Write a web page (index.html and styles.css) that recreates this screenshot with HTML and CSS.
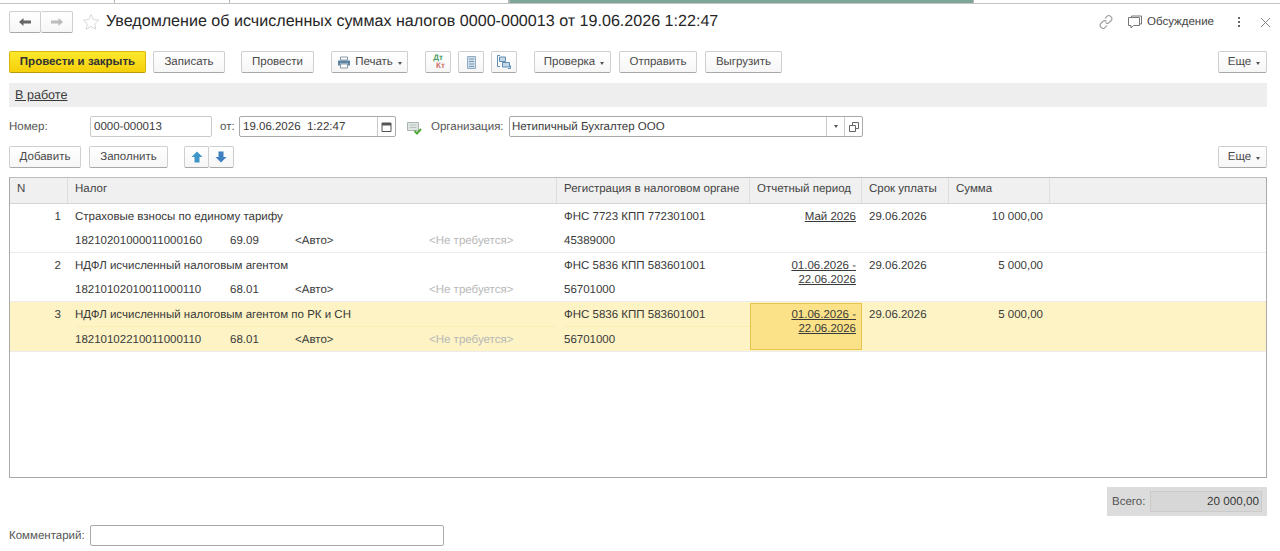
FILE: index.html
```html
<!DOCTYPE html>
<html>

<head>
    <meta http-equiv="Content-Type" content="text/html; charset=utf-8" />
    <title>Уведомление об исчисленных суммах налогов</title>
    <link rel="stylesheet" href="styles.css">
</head>

<body>
    <!-- Tab strip, only its lower edge is visible -->
    <div class="tabs">
        <div class="tab tab-a"></div>
        <div class="tab tab-b"></div>
        <div class="tab tab-c"></div>
        <div class="tab tab-active"></div>
        <div class="tab tab-rest"></div>
    </div>

    <div class="title-row">
        <div class="nav-group">
            <button class="btn nav-btn">
                <svg width="14" height="10" viewBox="0 0 14 10"><path d="M1 5l4.500-4v2.500h7.500v3h-7.500v2.500z" fill="#666" /></svg>
            </button>
            <button class="btn nav-btn">
                <svg width="14" height="10" viewBox="0 0 14 10"><path d="M13 5l-4.500-4v2.500h-7.500v3h7.500v2.500z" fill="#bbb" /></svg>
            </button>
        </div>
        <svg class="star" width="18" height="18" viewBox="0 0 18 18"><path d="M9 1.500l2.300 5 5.400.6-4 3.700 1.100 5.400-4.800-2.700-4.800 2.700 1.100-5.400-4-3.700 5.400-.6z" fill="none" stroke="#d8d8d8" /></svg>
        <h1 class="title">Уведомление об исчисленных суммах налогов 0000-000013 от 19.06.2026 1:22:47</h1>
        <div class="title-tools">
            <svg class="link-icon" width="16" height="16" viewBox="0 0 16 16" fill="none" stroke="#999" stroke-width="1.100">
                <path d="M7 4.500l2-2.200a2.400 2.400 0 0 1 3.500 0l.7.7a2.400 2.400 0 0 1 0 3.500l-2.200 2.200a2.400 2.400 0 0 1-3.400 0" />
                <path d="M9 11.500l-2 2.200a2.400 2.400 0 0 1-3.500 0l-.7-.7a2.400 2.400 0 0 1 0-3.500l2.200-2.200a2.400 2.400 0 0 1 3.400 0" />
            </svg>
            <svg class="chat-icon" width="14" height="14" viewBox="0 0 14 14" fill="none" stroke="#777">
                <path d="M3.500 2.500v-1.500h10v8h-1.500" />
                <path d="M.5 2.500h11v8h-6l-2.500 2.500v-2.500h-2.500z" />
            </svg>
            <span class="discuss">Обсуждение</span>
            <div class="kebab"><i></i><i></i><i></i></div>
            <svg class="close-icon" width="11" height="11" viewBox="0 0 11 11"><path d="M1 1l9 9M10 1l-9 9" stroke="#888" fill="none" /></svg>
        </div>
    </div>

    <div class="toolbar">
        <button class="btn btn-primary">Провести и закрыть</button>
        <button class="btn w-72 ml-7">Записать</button>
        <button class="btn w-73 ml-16">Провести</button>
        <button class="btn w-77 ml-17">
            <svg class="print-icon" width="14" height="13" viewBox="0 0 14 13">
                <path d="M3.500 4v-3h7v3z" fill="#fff" stroke="#8a9aa8" />
                <path d="M1 4.500h12v5h-2v-2h-8v2h-2z" fill="#5b84a6" />
                <path d="M3.500 8h7v4h-7z" fill="#fff" stroke="#8a9aa8" />
            </svg>Печать<span class="caret"></span>
        </button>
        <button class="btn icon-btn ml-17">
            <span class="dtkt"><span class="dt">Дт</span><span class="kt">Кт</span></span>
        </button>
        <button class="btn icon-btn ml-7">
            <svg width="9" height="13" viewBox="0 0 9 13">
                <path d="M.5.500h8v12h-8z" fill="#cfdde9" stroke="#8fadc6" />
                <path d="M2 3h5M2 5.500h5M2 8h5M2 10.500h5" stroke="#7f9fb9" />
            </svg>
        </button>
        <button class="btn icon-btn ml-7">
            <svg width="14" height="14" viewBox="0 0 14 14" fill="none" stroke="#5f8fb4">
                <path d="M3 .500h-2.500v11h2.500M11 13.500h2.500v-3" />
                <path d="M2.500 2h6v4.500h-6z" fill="#c5d6e4" />
                <path d="M5.500 7.500h7v4.500h-7z" fill="#c5d6e4" />
            </svg>
        </button>
        <button class="btn w-77 ml-17 btn-caret">Проверка<span class="caret"></span></button>
        <button class="btn w-78 ml-8">Отправить</button>
        <button class="btn w-77 ml-8">Выгрузить</button>
        <button class="btn btn-more btn-caret">Еще<span class="caret"></span></button>
    </div>

    <div class="status-bar"><a class="link">В работе</a></div>

    <div class="form-row">
        <label class="lbl lbl-number">Номер:</label>
        <div class="field field-number">0000-000013</div>
        <label class="lbl lbl-from">от:</label>
        <div class="field field-date">
            <span class="field-text">19.06.2026&nbsp; 1:22:47</span>
            <span class="field-btn">
                <svg width="11" height="11" viewBox="0 0 11 11">
                    <path d="M1 2h9v8.500h-9z" fill="#fff" stroke="#555" />
                    <path d="M1 2h9v2.500h-9z" fill="#555" />
                </svg>
            </span>
        </div>
        <svg class="check-icon" width="15" height="14" viewBox="0 0 15 14">
            <path d="M.5 1.500h11v8h-11z" fill="#dfe6e3" stroke="#a9b5b0" />
            <path d="M2.500 4h7M2.500 6.500h7" stroke="#b7c2bd" />
            <path d="M7.500 10l2.500 2.500 4-4.500" fill="none" stroke="#55a83c" stroke-width="2" />
        </svg>
        <label class="lbl lbl-org">Организация:</label>
        <div class="field field-org">
            <span class="field-text">Нетипичный Бухгалтер ООО</span>
            <span class="field-btn"><span class="caret caret-alone"></span></span>
            <span class="field-btn">
                <svg width="10" height="10" viewBox="0 0 10 10" fill="none" stroke="#666">
                    <path d="M3.500 3v-2.500h6v6h-2.500" />
                    <path d="M.5 3.500h6v6h-6z" />
                </svg>
            </span>
        </div>
    </div>

    <div class="toolbar toolbar-table">
        <button class="btn w-72">Добавить</button>
        <button class="btn w-79 ml-8">Заполнить</button>
        <div class="nav-group ml-16">
            <button class="btn arrow-btn">
                <svg width="12" height="12" viewBox="0 0 12 12"><path d="M6 .5l5.500 5.500h-3v5.500h-5v-5.500h-3z" fill="#3f94c8" /></svg>
            </button>
            <button class="btn arrow-btn">
                <svg width="12" height="12" viewBox="0 0 12 12"><path d="M6 11.500l5.500-5.500h-3v-5.500h-5v5.500h-3z" fill="#3f7fc0" /></svg>
            </button>
        </div>
        <button class="btn btn-more btn-caret">Еще<span class="caret"></span></button>
    </div>

    <div class="grid">
        <div class="grid-row grid-head">
            <div class="cell">N</div>
            <div class="cell">Налог</div>
            <div class="cell">Регистрация в налоговом органе</div>
            <div class="cell">Отчетный период</div>
            <div class="cell">Срок уплаты</div>
            <div class="cell">Сумма</div>
            <div class="cell cell-last"></div>
        </div>

        <div class="grid-row record">
            <div class="num">1</div>
            <div class="tax">
                <div class="line">Страховые взносы по единому тарифу</div>
                <div class="line sub">
                    <span class="kbk">18210201000011000160</span><span class="acc">69.09</span><span class="auto">&lt;Авто&gt;</span><span class="none">&lt;Не требуется&gt;</span>
                </div>
            </div>
            <div class="reg">
                <div class="line">ФНС 7723 КПП 772301001</div>
                <div class="line">45389000</div>
            </div>
            <div class="period"><a class="link">Май 2026</a></div>
            <div class="due">29.06.2026</div>
            <div class="sum">10 000,00</div>
            <div></div>
        </div>

        <div class="grid-row record">
            <div class="num">2</div>
            <div class="tax">
                <div class="line">НДФЛ исчисленный налоговым агентом</div>
                <div class="line sub">
                    <span class="kbk">18210102010011000110</span><span class="acc">68.01</span><span class="auto">&lt;Авто&gt;</span><span class="none">&lt;Не требуется&gt;</span>
                </div>
            </div>
            <div class="reg">
                <div class="line">ФНС 5836 КПП 583601001</div>
                <div class="line">56701000</div>
            </div>
            <div class="period"><a class="link">01.06.2026 -<br>22.06.2026</a></div>
            <div class="due">29.06.2026</div>
            <div class="sum">5 000,00</div>
            <div></div>
        </div>

        <div class="grid-row record selected">
            <div class="num">3</div>
            <div class="tax">
                <div class="line">НДФЛ исчисленный налоговым агентом по РК и СН</div>
                <div class="line sub">
                    <span class="kbk">18210102210011000110</span><span class="acc">68.01</span><span class="auto">&lt;Авто&gt;</span><span class="none">&lt;Не требуется&gt;</span>
                </div>
            </div>
            <div class="reg">
                <div class="line">ФНС 5836 КПП 583601001</div>
                <div class="line">56701000</div>
            </div>
            <div class="period current"><a class="link">01.06.2026 -<br>22.06.2026</a></div>
            <div class="due">29.06.2026</div>
            <div class="sum">5 000,00</div>
            <div></div>
        </div>
    </div>

    <div class="total-row">
        <div class="total">
            <span class="total-label">Всего:</span>
            <div class="total-value">20 000,00</div>
        </div>
    </div>

    <div class="comment-row">
        <label class="lbl lbl-comment">Комментарий:</label>
        <div class="field field-comment"></div>
    </div>
</body>

</html>
```

FILE: styles.css
```css
html,
body {
    margin: 0;
    height: 551px;
    overflow: hidden;
}

body {
    background-color: #fff;
    color: #3a3a3a;
    font-family: "Liberation Sans", Arial, sans-serif;
    font-size: 11.5px;
    text-rendering: geometricPrecision;
}

/* Tab strip */
.tabs {
    display: flex;
    height: 3px;
    border-bottom: 1px solid #c4c4c4;
}

.tab {
    border-right: 1px solid #b5b5b5;
}

.tab-a {
    width: 114px;
}

.tab-b {
    width: 114px;
}

.tab-c {
    width: 278px;
}

.tab-active {
    width: 463px;
    background-color: #7fa596;
    border-left: 1px solid #b5b5b5;
}

.tab-rest {
    flex: 1;
    border-right: none;
}

/* Title */
.title-row {
    display: flex;
    align-items: center;
    height: 36px;
    padding: 0 9px 0 9px;
}

.nav-group {
    display: flex;
}

.title-row .nav-group {
    margin-top: -1px;
}

.star {
    margin-left: 9px;
}

.title {
    margin: -1px 0 0 6px;
    font-size: 16.1px;
    font-weight: normal;
    color: #262626;
    white-space: nowrap;
}

.title-tools {
    display: flex;
    align-items: center;
    margin-left: auto;
}

.chat-icon {
    margin-left: 14px;
}

.discuss {
    margin-left: 5px;
    color: #444;
}

.kebab {
    display: flex;
    flex-direction: column;
    gap: 2px;
    margin-left: 24px;
}

.kebab i {
    width: 2px;
    height: 2px;
    background-color: #666;
}

.close-icon {
    margin-left: 20px;
}

/* Buttons */
.btn {
    display: inline-flex;
    align-items: center;
    justify-content: center;
    box-sizing: border-box;
    height: 22px;
    padding: 0;
    background: linear-gradient(#ffffff, #f6f6f6);
    border: 1px solid #cfcfcf;
    border-bottom-color: #a8a8a8;
    border-radius: 2px;
    color: #4a4a4a;
    font-family: inherit;
    font-size: 11.5px;
    text-rendering: geometricPrecision;
}

.btn-caret {
    padding-left: 3px;
}

.nav-btn {
    width: 32px;
}

.nav-btn+.nav-btn,
.arrow-btn+.arrow-btn {
    border-left: none;
}

.arrow-btn {
    width: 25px;
}

.btn-primary {
    width: 137px;
    background: linear-gradient(#fde92d, #f5cf0a);
    border-color: #d8b60c;
    border-bottom-color: #b89a08;
    color: #333;
    font-weight: bold;
}

.btn-more {
    width: 49px;
    margin-left: auto;
}

.icon-btn {
    width: 26px;
}

.w-72 {
    width: 72px;
}

.w-73 {
    width: 73px;
}

.w-77 {
    width: 77px;
}

.w-78 {
    width: 78px;
}

.w-79 {
    width: 79px;
}

.ml-7 {
    margin-left: 7px;
}

.ml-8 {
    margin-left: 8px;
}

.ml-16 {
    margin-left: 16px;
}

.ml-17 {
    margin-left: 17px;
}

.caret {
    width: 0;
    height: 0;
    margin-left: 5px;
    margin-top: 2px;
    border-left: 2.5px solid transparent;
    border-right: 2.5px solid transparent;
    border-top: 3px solid #555;
}

.caret-alone {
    margin: 0;
}

.print-icon {
    margin-right: 4px;
}

.dtkt {
    display: flex;
    flex-direction: column;
    font-size: 8px;
    font-weight: bold;
    line-height: 8px;
}

.dt {
    color: #4b9c5f;
}

.kt {
    margin-left: 5px;
    color: #d0706b;
}

/* Toolbars */
.toolbar {
    display: flex;
    align-items: center;
    padding: 11px 13px 0 9px;
}

.toolbar-table {
    padding-top: 9px;
}

.status-bar {
    display: flex;
    align-items: center;
    height: 24px;
    margin: 10px 13px 0 9px;
    padding-left: 6px;
    background-color: #eeeeee;
    font-size: 12.6px;
}

.link {
    color: #3a3a3a;
    text-decoration: underline;
}

/* Form row */
.form-row {
    display: flex;
    align-items: center;
    height: 21px;
    margin-top: 9px;
    padding-left: 9px;
}

.lbl {
    color: #555;
}

.lbl-number {
    width: 81px;
}

.lbl-from {
    margin-left: 8px;
    width: 19px;
}

.lbl-org {
    margin-left: 9px;
    width: 78px;
}

.field {
    display: flex;
    align-items: center;
    box-sizing: border-box;
    height: 21px;
    background-color: #fff;
    border: 1px solid #c9c9c9;
    border-radius: 2px;
    color: #3a3a3a;
}

.field-number {
    width: 122px;
    padding-left: 3px;
}

.field-date {
    width: 157px;
    border-color: #a9a9a9;
}

.field-org {
    width: 354px;
    border-color: #a9a9a9;
}

.field-text {
    flex: 1;
    padding-left: 3px;
}

.field-org .field-text {
    padding-left: 2px;
}

.field-btn {
    display: flex;
    align-items: center;
    justify-content: center;
    width: 17px;
    height: 100%;
    border-left: 1px solid #c9c9c9;
}

.check-icon {
    margin-left: 11px;
    margin-top: 3px;
}

/* Table */
.grid {
    box-sizing: border-box;
    height: 301px;
    margin: 9px 13px 0 9px;
    border: 1px solid #a9a9a9;
    border-top-color: #bdbdbd;
}

.grid-row {
    display: grid;
    grid-template-columns: 58px 489px 193px 112px 87px 101px 1fr;
}

.grid-head {
    height: 25px;
    background-color: #f0f0f0;
    border-bottom: 1px solid #d6d6d6;
    color: #444;
}

.cell {
    padding: 5px 0 0 7px;
    border-right: 1px solid #dedede;
    white-space: nowrap;
}

.cell-last {
    border-right: none;
}

.record {
    box-sizing: border-box;
    height: 49px;
    border-bottom: 1px solid #ececec;
}

.record.selected {
    height: 50px;
    background-color: #fdf3c4;
}

.line {
    display: flex;
    height: 24px;
    padding-top: 7px;
    box-sizing: border-box;
    white-space: nowrap;
}

.line+.line {
    padding-top: 7px;
}

.selected .line+.line {
    border-top: 1px solid #fbeeb4;
}

.num {
    padding: 7px 7px 0 0;
    text-align: right;
}

.tax,
.reg {
    padding-left: 7px;
}

.kbk {
    width: 155px;
}

.acc {
    width: 65px;
}

.auto {
    width: 134px;
}

.none {
    color: #b8b8b8;
}

.period {
    padding: 6px 6px 0 0;
    line-height: 14px;
    text-align: right;
}

.period.current {
    box-sizing: border-box;
    margin: 1px 0 1px 0;
    padding: 4px 5px 0 0;
    background-color: #fbe288;
    border: 1px solid #e8c44c;
}

.due {
    padding: 7px 0 0 7px;
}

.sum {
    padding: 7px 7px 0 0;
    text-align: right;
}

/* Footer */
.total-row {
    display: flex;
    justify-content: flex-end;
    margin: 9px 13px 0 0;
}

.total {
    display: flex;
    align-items: center;
    box-sizing: border-box;
    width: 160px;
    height: 29px;
    padding: 0 5px;
    background-color: #dcdcdc;
}

.total-label {
    width: 38px;
    color: #555;
}

.total-value {
    box-sizing: border-box;
    flex: 1;
    height: 21px;
    padding: 3px 2px 0 0;
    background-color: #d7d7d7;
    border: 1px solid #cbcbcb;
    font-size: 11.7px;
    text-align: right;
}

.comment-row {
    display: flex;
    align-items: center;
    margin-top: 9px;
    padding-left: 9px;
}

.lbl-comment {
    width: 81px;
}

.field-comment {
    width: 354px;
    border-color: #a9a9a9;
}
```
